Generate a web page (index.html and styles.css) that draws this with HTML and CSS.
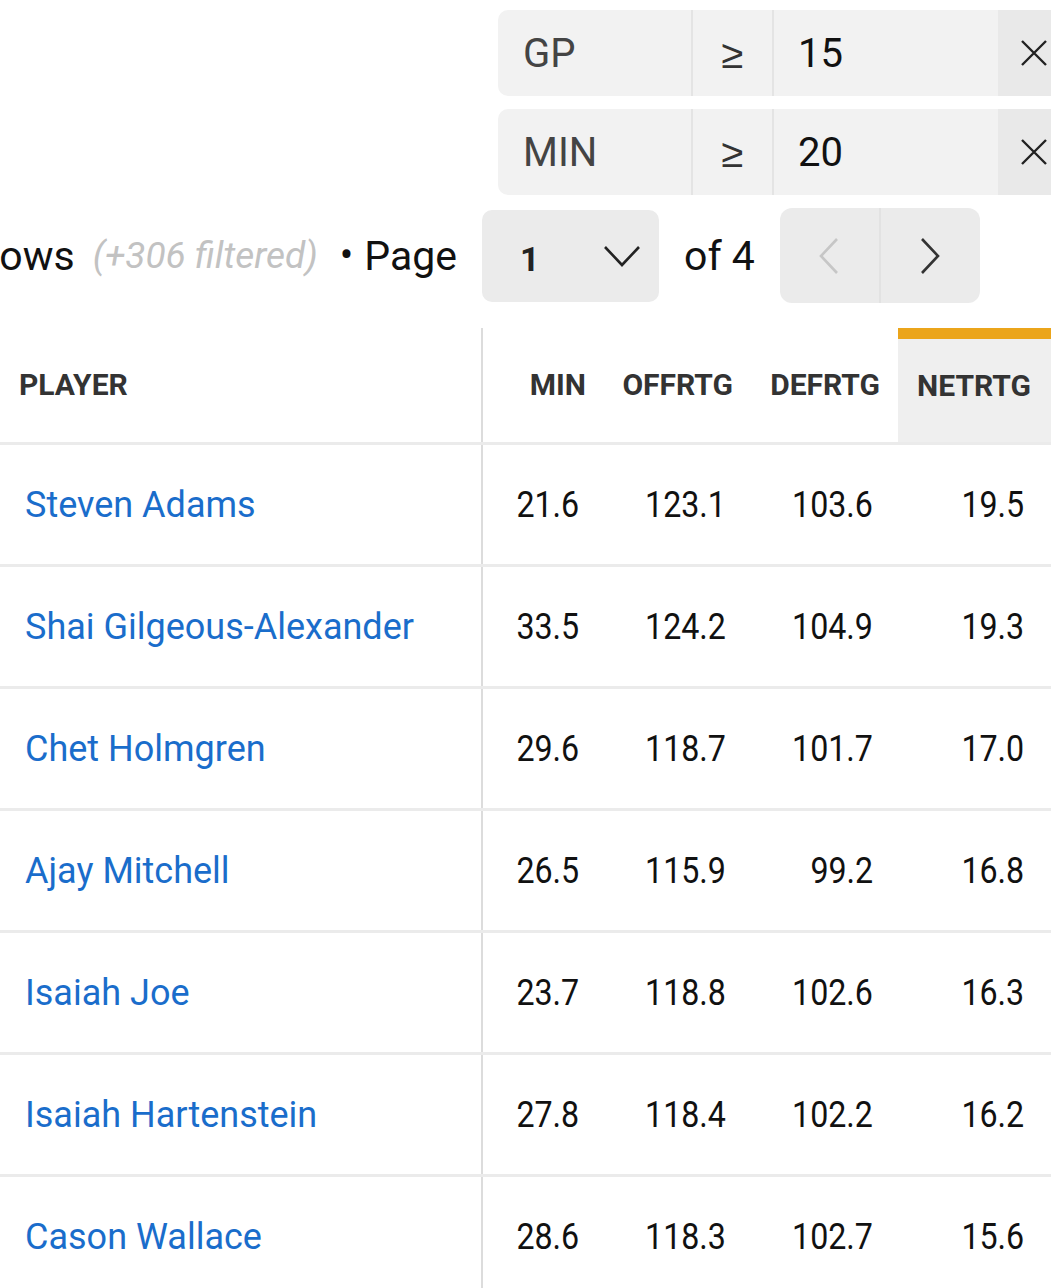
FILE: index.html
```html
<!DOCTYPE html>
<html lang="en">
<head>
<meta charset="utf-8">
<title>Player Stats</title>
<link rel="stylesheet" href="styles.css">
</head>
<body>
<div class="page">
  <div class="filters">
    <div class="filter">
      <div class="f-label">GP</div>
      <div class="f-op">≥</div>
      <div class="f-val">15</div>
      <div class="f-clear"><svg width="28" height="28" viewBox="0 0 28 28"><path d="M2 2L26 26M26 2L2 26" stroke="#222" stroke-width="2.4" fill="none"/></svg></div>
    </div>
    <div class="filter">
      <div class="f-label">MIN</div>
      <div class="f-op">≥</div>
      <div class="f-val">20</div>
      <div class="f-clear"><svg width="28" height="28" viewBox="0 0 28 28"><path d="M2 2L26 26M26 2L2 26" stroke="#222" stroke-width="2.4" fill="none"/></svg></div>
    </div>
  </div>

  <div class="pager">
    <span class="rows">Rows</span>
    <span class="filtered">(+306 filtered)</span>
    <span class="dot">•</span>
    <span class="pg">Page</span>
    <div class="select">
      <span class="sel-val">1</span>
      <svg width="38" height="22" viewBox="0 0 38 22"><path d="M2 2L19 20L36 2" stroke="#222" stroke-width="2.6" fill="none"/></svg>
    </div>
    <span class="of">of 4</span>
    <div class="nav">
      <div class="nav-btn"><svg width="20" height="38" viewBox="0 0 20 38"><path d="M18 2L2 19L18 36" stroke="#c6c6c6" stroke-width="2.6" fill="none"/></svg></div>
      <div class="nav-btn"><svg width="20" height="38" viewBox="0 0 20 38"><path d="M2 2L18 19L2 36" stroke="#333" stroke-width="2.6" fill="none"/></svg></div>
    </div>
  </div>

  <table class="stats">
    <colgroup>
      <col class="c-player"><col class="c-min"><col class="c-std"><col class="c-std"><col class="c-net">
    </colgroup>
    <thead>
      <tr>
        <th class="player">PLAYER</th>
        <th>MIN</th>
        <th>OFFRTG</th>
        <th>DEFRTG</th>
        <th class="active">NETRTG</th>
      </tr>
    </thead>
    <tbody>
      <tr><td class="player"><a>Steven Adams</a></td><td><span class="num">21.6</span></td><td><span class="num">123.1</span></td><td><span class="num">103.6</span></td><td class="net"><span class="num">19.5</span></td></tr>
      <tr><td class="player"><a>Shai Gilgeous-Alexander</a></td><td><span class="num">33.5</span></td><td><span class="num">124.2</span></td><td><span class="num">104.9</span></td><td class="net"><span class="num">19.3</span></td></tr>
      <tr><td class="player"><a>Chet Holmgren</a></td><td><span class="num">29.6</span></td><td><span class="num">118.7</span></td><td><span class="num">101.7</span></td><td class="net"><span class="num">17.0</span></td></tr>
      <tr><td class="player"><a>Ajay Mitchell</a></td><td><span class="num">26.5</span></td><td><span class="num">115.9</span></td><td><span class="num">99.2</span></td><td class="net"><span class="num">16.8</span></td></tr>
      <tr><td class="player"><a>Isaiah Joe</a></td><td><span class="num">23.7</span></td><td><span class="num">118.8</span></td><td><span class="num">102.6</span></td><td class="net"><span class="num">16.3</span></td></tr>
      <tr><td class="player"><a>Isaiah Hartenstein</a></td><td><span class="num">27.8</span></td><td><span class="num">118.4</span></td><td><span class="num">102.2</span></td><td class="net"><span class="num">16.2</span></td></tr>
      <tr><td class="player"><a>Cason Wallace</a></td><td><span class="num">28.6</span></td><td><span class="num">118.3</span></td><td><span class="num">102.7</span></td><td class="net"><span class="num">15.6</span></td></tr>
    </tbody>
  </table>
</div>
</body>
</html>
```

FILE: styles.css
```css
html, body {
  margin: 0;
  padding: 0;
  background: #fff;
}
body {
  width: 1051px;
  height: 1288px;
  overflow: hidden;
  font-family: Roboto, "Liberation Sans", sans-serif;
  color: #111;
}
.page {
  width: 1051px;
}

/* filters */
.filters {
  display: flex;
  flex-direction: column;
  gap: 13px;
  padding: 10px 0 0 498px;
}
.filter {
  display: flex;
  width: 620px;
  height: 86px;
  background: #f2f2f2;
  border-radius: 10px 0 0 10px;
  align-items: stretch;
}
.f-label {
  width: 168px;
  padding-left: 25px;
  border-right: 2px solid #e4e4e4;
  display: flex;
  align-items: center;
  font-size: 40px;
  color: #444;
}
.f-op {
  width: 81px;
  border-right: 2px solid #e4e4e4;
  display: flex;
  align-items: center;
  justify-content: center;
  font-family: "Liberation Sans", sans-serif;
  font-size: 40px;
  color: #333;
  padding-top: 2px;
  box-sizing: border-box;
}
.f-val {
  width: 200px;
  padding-left: 24px;
  display: flex;
  align-items: center;
  font-size: 40px;
  color: #111;
}
.f-clear {
  flex: 1;
  background: #e9e9e9;
  display: flex;
  align-items: center;
  padding-left: 22px;
}

/* pager */
.pager {
  display: flex;
  align-items: center;
  height: 95px;
  margin-top: 13px;
  margin-left: -26px;
  font-size: 41px;
  color: #111;
  white-space: nowrap;
}
.rows {
  margin-right: 18px;
}
.filtered {
  font-style: italic;
  font-size: 37px;
  color: #c2c2c2;
  margin-right: 22px;
}
.dot {
  font-size: 40px;
  margin-right: 11px;
}
.pg {
  margin-right: 25px;
}
.select {
  width: 177px;
  height: 92px;
  box-sizing: border-box;
  background: #ebebeb;
  border-radius: 10px;
  display: flex;
  align-items: center;
  justify-content: space-between;
  padding: 0 18px 0 38px;
}
.sel-val {
  font-size: 34px;
  font-weight: 700;
  color: #222;
  padding-top: 6px;
}
.of {
  margin-left: 25px;
  margin-right: 25px;
}
.nav {
  display: flex;
  width: 200px;
  height: 95px;
  background: #ebebeb;
  border-radius: 12px;
  overflow: hidden;
}
.nav-btn {
  flex: 1;
  display: flex;
  align-items: center;
  justify-content: center;
}
.nav-btn + .nav-btn {
  border-left: 2px solid #e2e2e2;
}

/* table */
.stats {
  margin-top: 25px;
  width: 1051px;
  table-layout: fixed;
  border-collapse: collapse;
  border-spacing: 0;
}
.c-player { width: 482px; }
.c-min { width: 122px; }
.c-std { width: 147px; }
.c-net { width: 153px; }

.stats th {
  height: 115px;
  padding: 0 18px 0 0;
  text-align: right;
  font-size: 30px;
  font-weight: 700;
  color: #333;
  border-bottom: 3px solid #ebebeb;
  box-sizing: border-box;
  vertical-align: middle;
}
.stats th.player {
  text-align: left;
  padding-left: 19px;
}
.stats th.active {
  background: #efefef;
  box-shadow: inset 0 11px 0 #eba51b;
  padding-right: 20px;
  padding-top: 2px;
}
.stats td {
  height: 119px;
  padding: 0 25px 0 0;
  text-align: right;
  border-bottom: 3px solid #ebebeb;
  vertical-align: middle;
  font-size: 37px;
  color: #111;
}
.stats td.net {
  padding-right: 27px;
}
.stats .player {
  border-right: 2px solid #dcdcdc;
}
.stats td.player {
  text-align: left;
  padding-left: 25px;
}
.stats td.player a {
  font-size: 36px;
  color: #1a6dcb;
  text-decoration: none;
}
.num {
  display: inline-block;
  transform: scaleX(0.87);
  transform-origin: right center;
}
```
